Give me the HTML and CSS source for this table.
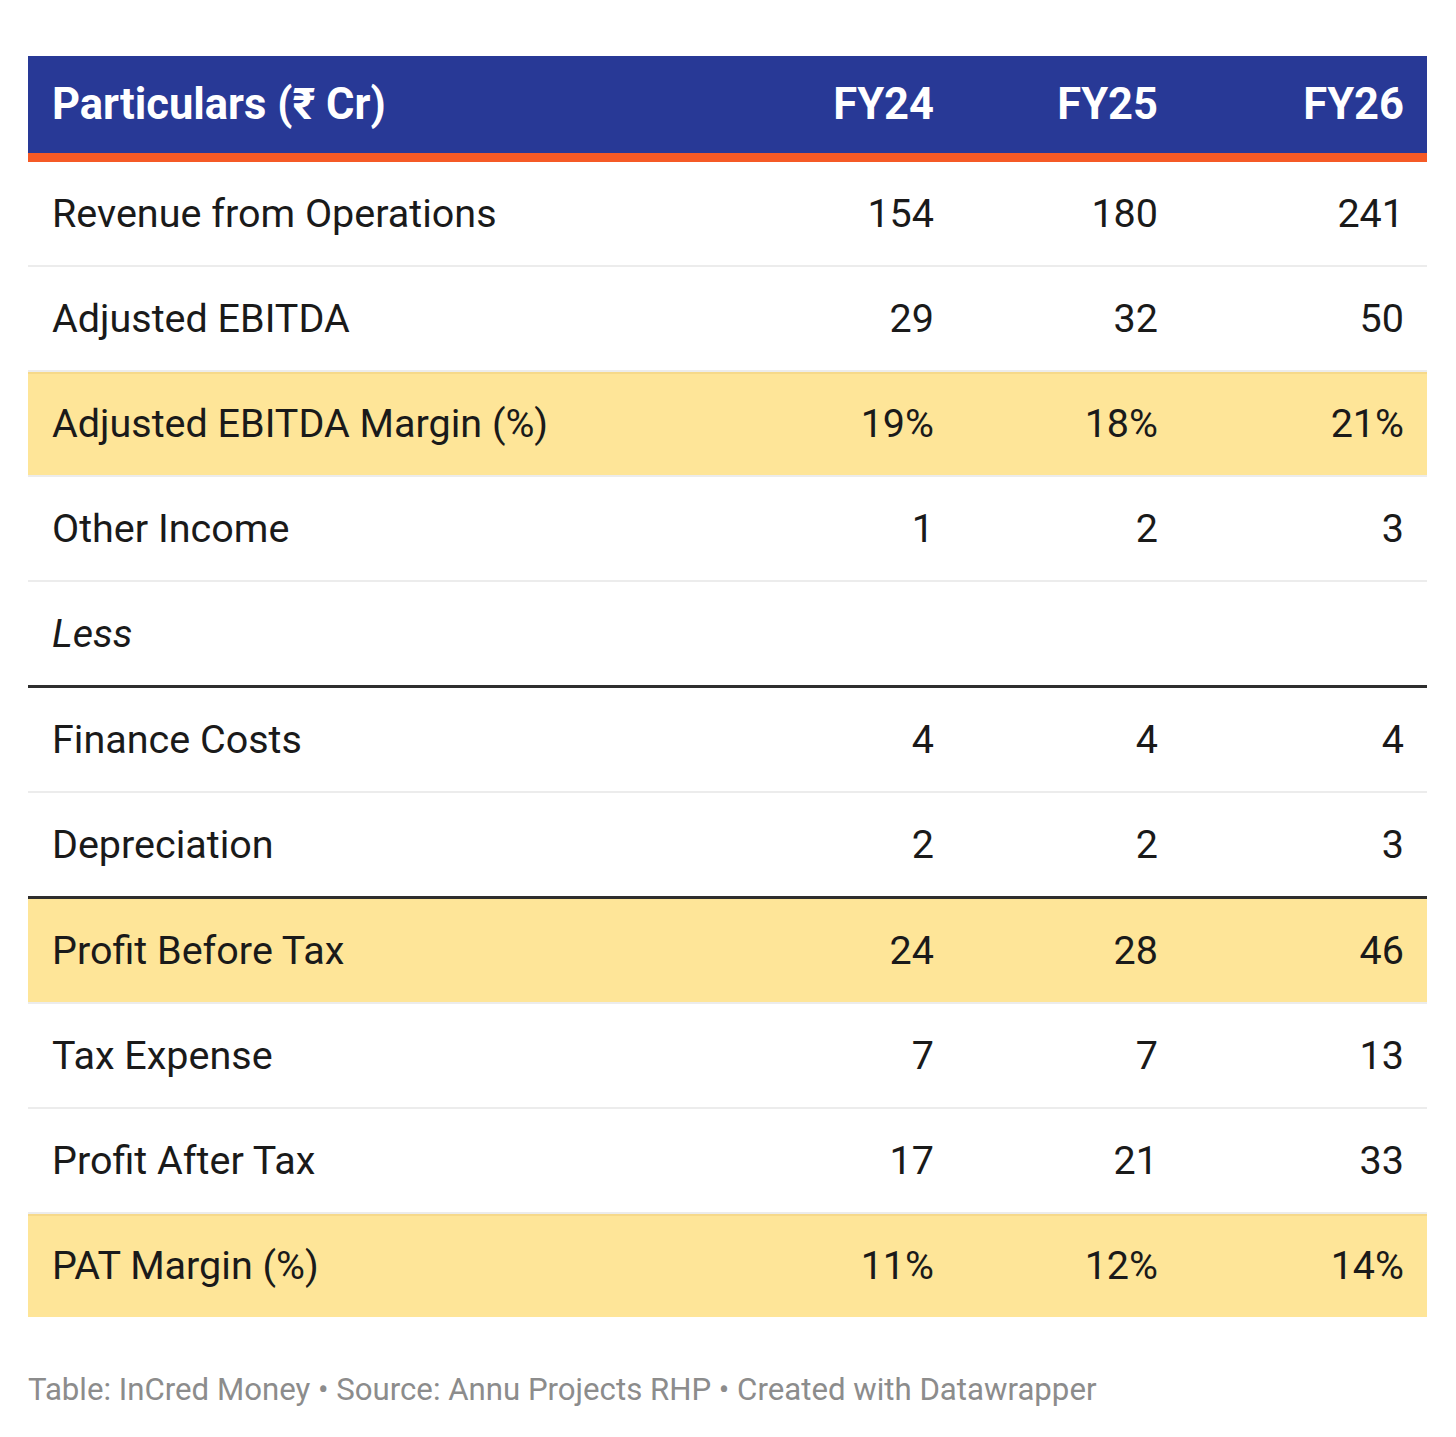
FILE: index.html
```html
<!DOCTYPE html>
<html>
<head>
<meta charset="utf-8">
<link rel="stylesheet" href="styles.css">
</head>
<body>
<div class="wrap">
  <div class="table">
    <div class="row head">
      <div class="cell label">Particulars (₹ Cr)</div>
      <div class="cell num">FY24</div>
      <div class="cell num">FY25</div>
      <div class="cell num">FY26</div>
    </div>
    <div class="row">
      <div class="cell label">Revenue from Operations</div>
      <div class="cell num">154</div>
      <div class="cell num">180</div>
      <div class="cell num">241</div>
    </div>
    <div class="row">
      <div class="cell label">Adjusted EBITDA</div>
      <div class="cell num">29</div>
      <div class="cell num">32</div>
      <div class="cell num">50</div>
    </div>
    <div class="row hl">
      <div class="cell label">Adjusted EBITDA Margin (%)</div>
      <div class="cell num">19%</div>
      <div class="cell num">18%</div>
      <div class="cell num">21%</div>
    </div>
    <div class="row">
      <div class="cell label">Other Income</div>
      <div class="cell num">1</div>
      <div class="cell num">2</div>
      <div class="cell num">3</div>
    </div>
    <div class="row dark">
      <div class="cell label italic">Less</div>
      <div class="cell num"></div>
      <div class="cell num"></div>
      <div class="cell num"></div>
    </div>
    <div class="row">
      <div class="cell label">Finance Costs</div>
      <div class="cell num">4</div>
      <div class="cell num">4</div>
      <div class="cell num">4</div>
    </div>
    <div class="row dark">
      <div class="cell label">Depreciation</div>
      <div class="cell num">2</div>
      <div class="cell num">2</div>
      <div class="cell num">3</div>
    </div>
    <div class="row hl notop">
      <div class="cell label">Profit Before Tax</div>
      <div class="cell num">24</div>
      <div class="cell num">28</div>
      <div class="cell num">46</div>
    </div>
    <div class="row">
      <div class="cell label">Tax Expense</div>
      <div class="cell num">7</div>
      <div class="cell num">7</div>
      <div class="cell num">13</div>
    </div>
    <div class="row">
      <div class="cell label">Profit After Tax</div>
      <div class="cell num">17</div>
      <div class="cell num">21</div>
      <div class="cell num">33</div>
    </div>
    <div class="row hl last">
      <div class="cell label">PAT Margin (%)</div>
      <div class="cell num">11%</div>
      <div class="cell num">12%</div>
      <div class="cell num">14%</div>
    </div>
  </div>
  <div class="footer">Table: InCred Money • Source: Annu Projects RHP • Created with Datawrapper</div>
</div>
</body>
</html>
```
FILE: styles.css
```css
html, body {
  margin: 0;
  padding: 0;
  background: #ffffff;
}
body {
  font-family: Roboto, "Liberation Sans", sans-serif;
  color: #1a1a1a;
}
.wrap {
  padding: 56px 29px 0 28px;
}
.table {
  display: flex;
  flex-direction: column;
}
.row {
  display: grid;
  grid-template-columns: 1fr 224px 224px 246px;
  height: 103px;
  align-items: center;
  border-bottom: 2px solid #ececec;
  font-size: 39.5px;
}
.cell {
  padding: 0 23px 0 24px;
  white-space: nowrap;
}
.num {
  text-align: right;
}
.head {
  background: #283996;
  color: #ffffff;
  font-weight: 700;
  font-size: 43.5px;
  height: 97px;
  border-bottom: 9px solid #f55a26;
}
.hl {
  background: #fee598;
  box-shadow: inset 0 2px 0 #f6d98a;
}
.hl.notop {
  box-shadow: none;
}
.dark {
  border-bottom: 3px solid #2e2e2e;
}
.italic {
  font-style: italic;
}
.last {
  border-bottom: none;
}
.footer {
  margin-top: 55px;
  font-size: 31.2px;
  color: #8c8c8c;
  line-height: 36px;
}
```
